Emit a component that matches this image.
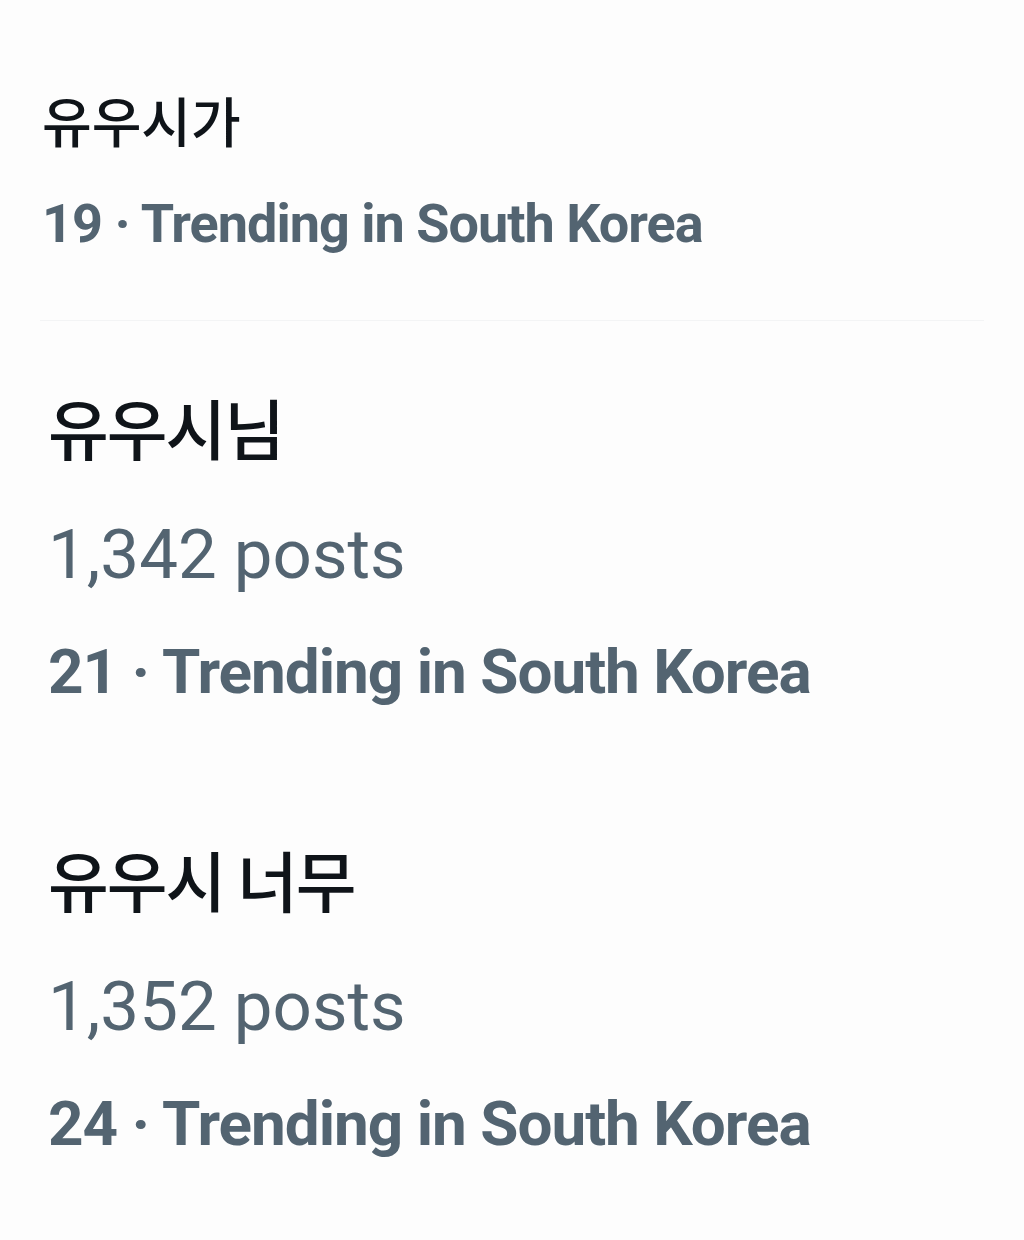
import React from 'react'

const trends = [
  { name: '유우시님', posts: '1,342 posts', rank: '21' },
  { name: '유우시 너무', posts: '1,352 posts', rank: '24' },
]

export default function App() {
  return (
    <div className="w-[1024px] h-[1240px] bg-[#fdfdfd] overflow-hidden">
      <div className="pl-[42px] pt-[93px]">
        <div className="text-[54px] leading-none font-medium text-[#0f1419] font-['Noto_Sans_CJK_KR',sans-serif]">
          유우시가
        </div>
        <div className="mt-[50px] text-[54px] leading-none font-bold text-[#536471] tracking-[-1px] font-['Roboto',sans-serif]">
          19 · Trending in South Korea
        </div>
      </div>

      <div className="mt-[69px] h-px bg-[#f3f4f5] mx-[40px]" />

      {trends.map((t, i) => (
        <div key={i} className={i === 0 ? 'pl-[48px] pt-[72px]' : 'pl-[48px] pt-[142px]'}>
          <div className="text-[66px] leading-none font-medium tracking-[-2px] text-[#0f1419] font-['Noto_Sans_CJK_KR',sans-serif]">
            {t.name}
          </div>
          <div className="mt-[61px] text-[69px] leading-none font-normal text-[#536471] font-['Roboto',sans-serif]">
            {t.posts}
          </div>
          <div className="mt-[52px] text-[62px] leading-none font-bold text-[#536471] tracking-[-1px] font-['Roboto',sans-serif]">
            {t.rank} · Trending in South Korea
          </div>
        </div>
      ))}
    </div>
  )
}
